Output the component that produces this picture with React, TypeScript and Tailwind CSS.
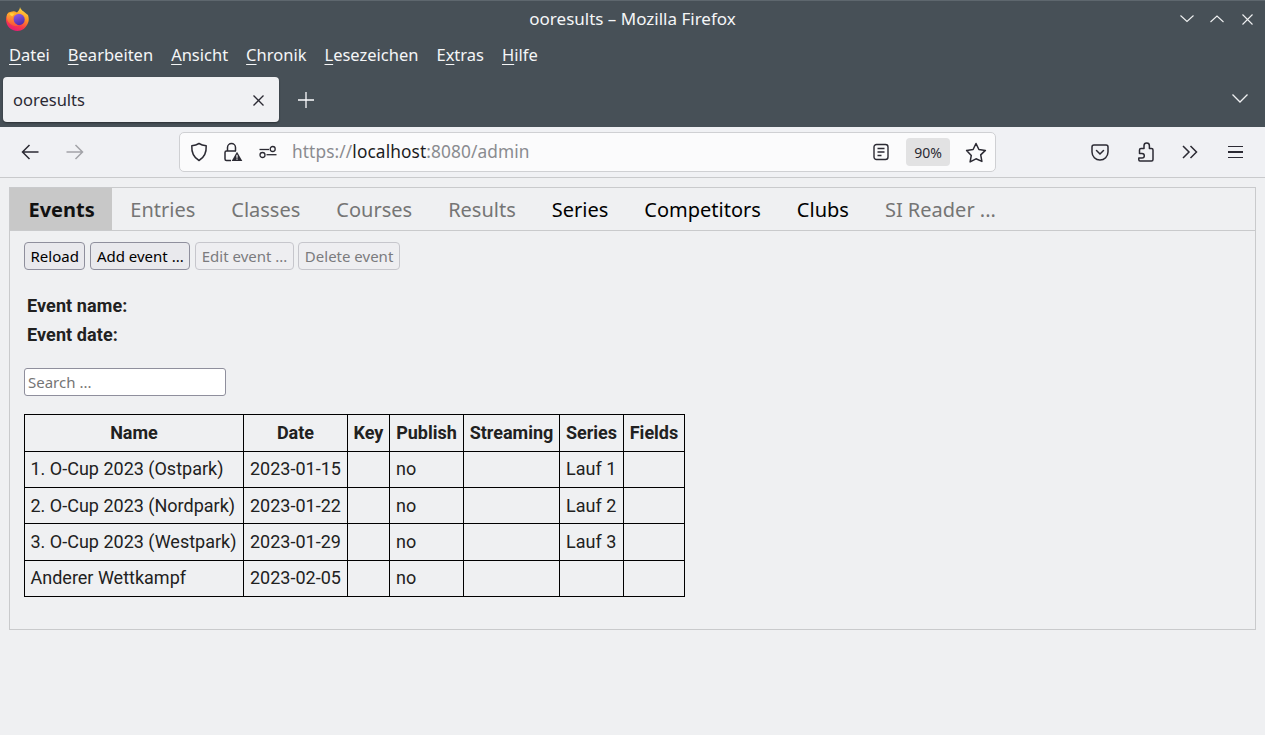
const menus = [
  { first: "D", rest: "atei" },
  { first: "B", rest: "earbeiten" },
  { first: "A", rest: "nsicht" },
  { first: "C", rest: "hronik" },
  { first: "L", rest: "esezeichen" },
];

const tabs = [
  { label: "Entries", on: false },
  { label: "Classes", on: false },
  { label: "Courses", on: false },
  { label: "Results", on: false },
  { label: "Series", on: true },
  { label: "Competitors", on: true },
  { label: "Clubs", on: true },
  { label: "SI Reader ...", on: false },
];

const rows = [
  { h: "h-[36px]", pb: "pb-[2px]", cells: ["1. O-Cup 2023 (Ostpark)", "2023-01-15", "", "no", "", "Lauf 1", ""] },
  { h: "h-[36px]", pb: "pb-[1px]", cells: ["2. O-Cup 2023 (Nordpark)", "2023-01-22", "", "no", "", "Lauf 2", ""] },
  { h: "h-[37px]", pb: "pb-[1px]", cells: ["3. O-Cup 2023 (Westpark)", "2023-01-29", "", "no", "", "Lauf 3", ""] },
  { h: "h-[36px]", pb: "pb-[2px]", cells: ["Anderer Wettkampf", "2023-02-05", "", "no", "", "", ""] },
];

const headers = [
  { label: "Name", w: "w-[219px]" },
  { label: "Date", w: "w-[104px]" },
  { label: "Key", w: "w-[42px]" },
  { label: "Publish", w: "w-[74px]" },
  { label: "Streaming", w: "w-[96px]" },
  { label: "Series", w: "w-[64px]" },
  { label: "Fields", w: "w-[61px]" },
];

function FirefoxLogo() {
  return (
    <svg width="24" height="24" viewBox="0 0 24 24" className="shrink-0">
      <defs>
        <linearGradient id="ff-a" x1="0.75" y1="0" x2="0.35" y2="1">
          <stop offset="0" stopColor="#ffe14a" />
          <stop offset="0.4" stopColor="#ff9a22" />
          <stop offset="0.75" stopColor="#f7394a" />
          <stop offset="1" stopColor="#e5197a" />
        </linearGradient>
        <linearGradient id="ff-b" x1="0.3" y1="0" x2="0.7" y2="1">
          <stop offset="0" stopColor="#8f5be8" />
          <stop offset="1" stopColor="#4b2ba6" />
        </linearGradient>
        <linearGradient id="ff-c" x1="0.5" y1="0" x2="0.4" y2="1">
          <stop offset="0" stopColor="#ffb62e" />
          <stop offset="1" stopColor="#f9503a" />
        </linearGradient>
      </defs>
      <path
        d="M14 0c.5 3 4 4.500 6 6.500L22 8c1 3 1 6 0 8-2 5-6 8-10.500 8C5 24 0 19 0 12.500 0 10 1 7.500 2.500 5.500 4 5 6.500 4 8 4.200c1.200.2 2.200.6 3 1.300C12.500 4 14 2 14 0z"
        fill="url(#ff-a)"
      />
      <circle cx="13" cy="12.500" r="5.700" fill="url(#ff-b)" />
      <path
        d="M1 7.500C3 5 7.500 4.500 10.500 7 8.500 7.800 7.300 9.300 7.500 11c-.3 3.500 2 7 6 7.500C9 20 3.500 18 1.500 13.500.8 11.500.6 9.500 1 7.500z"
        fill="url(#ff-c)"
      />
      <path d="M3.500 6.800c1.500-.6 3.300-.6 5 .2-1 .7-1.700 1.500-2 2.300-1.100-.1-2.300-1-3-2.500z" fill="#ffd23f" />
    </svg>
  );
}

function ShieldIcon() {
  return (
    <svg width="18" height="20" viewBox="0 0 18 20" fill="none" stroke="#2b2a33" strokeWidth="1.500">
      <path d="M9 1.500c2 1.300 4.500 2 7.200 2.200.4 6.800-1.700 11.600-7.200 14.800C3.500 15.300 1.400 10.500 1.800 3.700 4.500 3.500 7 2.800 9 1.500z" strokeLinejoin="round" />
    </svg>
  );
}

function LockWarnIcon() {
  return (
    <svg width="20" height="20" viewBox="0 0 20 20" fill="none">
      <path d="M4.500 9V5.500a4 4 0 0 1 8 0V9" stroke="#2b2a33" strokeWidth="1.500" />
      <path d="M8 18.500H3.500a1.500 1.500 0 0 1-1.500-1.500v-6.500A1.500 1.500 0 0 1 3.500 9h9.500" stroke="#2b2a33" strokeWidth="1.500" />
      <path d="M14 9.800l5.300 9.200H8.700z" fill="#2b2a33" />
      <rect x="13.400" y="12.800" width="1.200" height="3" fill="#fff" />
      <rect x="13.400" y="16.500" width="1.200" height="1.200" fill="#fff" />
    </svg>
  );
}

function PermissionsIcon() {
  return (
    <svg width="18" height="14" viewBox="0 0 18 14" fill="none" stroke="#2b2a33" strokeWidth="1.300">
      <path d="M0.500 4.500h9.500" />
      <circle cx="13.700" cy="4" r="2.500" />
      <circle cx="3.500" cy="10" r="2.500" />
      <path d="M7.500 9.700h10" />
    </svg>
  );
}

function ReaderIcon() {
  return (
    <svg width="16" height="18" viewBox="0 0 16 18" fill="none" stroke="#2b2a33" strokeWidth="1.400">
      <rect x="1" y="1.500" width="14" height="15" rx="2.500" />
      <path d="M4.500 5.500h7M4.500 9h7M4.500 12.500h4" />
    </svg>
  );
}

function StarIcon() {
  return (
    <svg width="22" height="21" viewBox="0 0 22 21" fill="none" stroke="#2b2a33" strokeWidth="1.500" strokeLinejoin="round">
      <path d="M11 1.500l2.900 6 6.500.9-4.700 4.500 1.200 6.500L11 16.800l-5.900 3.100 1.200-6.500L1.600 8.400l6.500-.9z" />
    </svg>
  );
}

function PocketIcon() {
  return (
    <svg width="18" height="17" viewBox="0 0 18 17" fill="none" stroke="#2b2a33" strokeWidth="1.500">
      <path d="M3 1h12a2 2 0 0 1 2 2v5a8 8 0 0 1-16 0V3a2 2 0 0 1 2-2z" />
      <path d="M5.500 6.500L9 10l3.500-3.500" strokeLinecap="round" />
    </svg>
  );
}

function ExtensionIcon() {
  return (
    <svg width="18" height="20" viewBox="0 0 18 20" fill="none" stroke="#2b2a33" strokeWidth="1.500" strokeLinejoin="round">
      <path d="M4 6.500h3V3.800a2.700 2.700 0 0 1 5.400 0v2.700h2.100a1.500 1.500 0 0 1 1.500 1.500v9.500a1.500 1.500 0 0 1-1.500 1.500H3A1.200 1.200 0 0 1 1.800 17.800V16H5a2.300 2.300 0 0 0 0-4.600H2.500V8A1.500 1.500 0 0 1 4 6.500z" />
    </svg>
  );
}

function ChevronsIcon() {
  return (
    <svg width="16" height="14" viewBox="0 0 16 14" fill="none" stroke="#2b2a33" strokeWidth="1.500">
      <path d="M1 1l6 6-6 6M8.500 1l6 6-6 6" />
    </svg>
  );
}

function BackIcon({ color }: { color: string }) {
  return (
    <svg width="18" height="16" viewBox="0 0 18 16" fill="none" stroke={color} strokeWidth="1.500">
      <path d="M17.500 8H1.500M8.500 1l-7 7 7 7" />
    </svg>
  );
}

function Glyph({ w, h, d, color, sw = 1.3 }: { w: number; h: number; d: string; color: string; sw?: number }) {
  return (
    <svg width={w} height={h} viewBox={`0 0 ${w} ${h}`} fill="none" stroke={color} strokeWidth={sw}>
      <path d={d} />
    </svg>
  );
}

function MenuText({ first, rest }: { first: string; rest: string }) {
  return (
    <span>
      <span className="underline underline-offset-[3px] decoration-1">{first}</span>
      {rest}
    </span>
  );
}

export default function App() {
  return (
    <div className="h-[735px] w-full overflow-hidden bg-[#eff0f2] font-['Noto_Sans',sans-serif]">
      {/* window frame */}
      <div className="bg-[#475057] text-white border-t border-[#5e676e]">
        <div className="flex h-[36px] items-center">
          <div className="flex w-[100px] pl-[6px]">
            <FirefoxLogo />
          </div>
          <div className="flex-1 text-center text-[17px] text-[#f5f6f7]">ooresults – Mozilla Firefox</div>
          <div className="flex w-[100px] items-center justify-end pr-[12px]">
            <Glyph w={14} h={8} d="M.5.500l6.500 6 6.500-6" color="#f0f1f2" sw={1.1} />
            <div className="ml-[16px]">
              <Glyph w={14} h={8} d="M.5 7l6.500-6 6.500 6" color="#f0f1f2" sw={1.1} />
            </div>
            <div className="ml-[18px]">
              <Glyph w={11} h={11} d="M.5.500l10 10M10.500.500l-10 10" color="#f0f1f2" sw={1.1} />
            </div>
          </div>
        </div>
        <div className="flex h-[36px] items-center gap-[18px] pl-[9px] text-[16.5px] text-[#f5f6f7]">
          {menus.map((m) => (
            <MenuText key={m.first} first={m.first} rest={m.rest} />
          ))}
          <span>
            E<span className="underline underline-offset-[3px] decoration-1">x</span>tras
          </span>
          <MenuText first="H" rest="ilfe" />
        </div>
        <div className="flex h-[54px] items-start pl-[3px]">
          <div className="mt-[4px] flex h-[45px] w-[276px] items-center justify-between rounded-[4px] bg-[#f0f1f3] pl-[10px] pr-[15px] pt-[1px] text-[16.5px] text-[#2b2a33] shadow-[0_1px_2px_rgba(0,0,0,0.4)]">
            <span>ooresults</span>
            <Glyph w={11} h={11} d="M.5.500l10 10M10.500.500l-10 10" color="#2b2a33" />
          </div>
          <div className="ml-[19px] mt-[19px]">
            <Glyph w={16} h={16} d="M8 0v16M0 8h16" color="#fbfbfe" />
          </div>
          <div className="ml-auto mt-[21px] pr-[17px]">
            <Glyph w={16} h={9} d="M.5.500l7.500 7.500 7.500-7.500" color="#f0f1f2" />
          </div>
        </div>
      </div>

      {/* toolbar */}
      <div className="flex h-[51px] items-center border-b border-[#c9cacc] bg-[#f0f1f4]">
        <div className="flex w-[179px] items-center gap-[27px] pl-[21px]">
          <BackIcon color="#2b2a33" />
          <div className="rotate-180">
            <BackIcon color="#a2a3a8" />
          </div>
        </div>
        <div className="flex h-[40px] w-[817px] items-center rounded-[5px] border border-[#cfd0d3] bg-[#fbfbfc] pl-[10px] pr-[8px]">
          <ShieldIcon />
          <div className="ml-[15px]">
            <LockWarnIcon />
          </div>
          <div className="ml-[16px]">
            <PermissionsIcon />
          </div>
          <div className="ml-[15px] text-[17.3px] tracking-[0.1px] text-[#8a8b90]">
            https://<span className="text-[#1c1b22]">localhost</span>:8080/admin
          </div>
          <div className="ml-auto">
            <ReaderIcon />
          </div>
          <div className="ml-[17px] flex h-[28px] w-[44px] items-center justify-center rounded-[4px] bg-[#e2e2e3] text-[14px] text-[#2b2a33]">90%</div>
          <div className="ml-[15px]">
            <StarIcon />
          </div>
        </div>
        <div className="ml-[95px] flex items-center">
          <PocketIcon />
          <div className="ml-[28px]">
            <ExtensionIcon />
          </div>
          <div className="ml-[27px]">
            <ChevronsIcon />
          </div>
          <div className="ml-[30px] flex flex-col gap-[4px]">
            <div className="h-[1.500px] w-[15px] bg-[#2b2a33]" />
            <div className="h-[1.500px] w-[15px] bg-[#2b2a33]" />
            <div className="h-[1.500px] w-[15px] bg-[#2b2a33]" />
          </div>
        </div>
      </div>

      {/* page */}
      <div className="px-[9px] pt-[9px]">
        <div className="h-[443px] border border-[#c9cacc] bg-[#eff0f2]">
          <div className="flex h-[43px] items-stretch border-b border-[#c9cacc] text-[20px]">
            <div className="flex items-center bg-[#c8c8c8] pl-[18.500px] pr-[17.500px] pt-[1px] font-bold text-[#111]">Events</div>
            {tabs.map((t) => (
              <div key={t.label} className={`flex items-center px-[18px] pt-[1px] ${t.on ? "text-black" : "text-[#757575]"}`}>
                {t.label}
              </div>
            ))}
          </div>
          <div className="px-[14px] pt-[11px] font-['Roboto',sans-serif] text-[18px] text-[#212121]">
            <div className="flex gap-[5px] font-['Noto_Sans',sans-serif] text-[15px]">
              <button className="h-[28px] rounded-[4px] border border-[#8f8f9d] bg-[#e9e9ed] px-[5.500px] text-black">Reload</button>
              <button className="h-[28px] rounded-[4px] border border-[#8f8f9d] bg-[#e9e9ed] px-[5.500px] text-black">Add event ...</button>
              <button className="h-[28px] rounded-[4px] border border-[#c6c6cc] bg-[#eeeef1] px-[5.500px] text-[#7b7b7e]">Edit event ...</button>
              <button className="-ml-[1px] h-[28px] rounded-[4px] border border-[#c6c6cc] bg-[#eeeef1] px-[6px] text-[#7b7b7e]">Delete event</button>
            </div>
            <div className="mt-[21px] pl-[3px] font-bold leading-[29px] tracking-[0.09px]">
              <div>Event name:</div>
              <div>Event date:</div>
            </div>
            <input
              readOnly
              placeholder="Search ..."
              className="mt-[19px] block h-[28px] w-[202px] rounded-[3px] border border-[#8f8f9d] bg-white px-[3px] font-['Noto_Sans',sans-serif] text-[15px] placeholder:text-[#757575]"
            />
            <table className="mt-[18px] table-fixed border-collapse">
              <thead>
                <tr className="h-[37px]">
                  {headers.map((h) => (
                    <th key={h.label} className={`border border-black p-0 pb-[1px] text-center font-bold ${h.w}`}>
                      {h.label}
                    </th>
                  ))}
                </tr>
              </thead>
              <tbody>
                {rows.map((r) => (
                  <tr key={r.cells[0]} className={r.h}>
                    {r.cells.map((c, i) => (
                      <td
                        key={i}
                        className={`whitespace-nowrap border border-black pr-0 pt-0 ${r.pb} ${i === 0 ? "pl-[5.500px]" : "pl-[6px]"}`}
                      >
                        {c}
                      </td>
                    ))}
                  </tr>
                ))}
              </tbody>
            </table>
          </div>
        </div>
      </div>
    </div>
  );
}
